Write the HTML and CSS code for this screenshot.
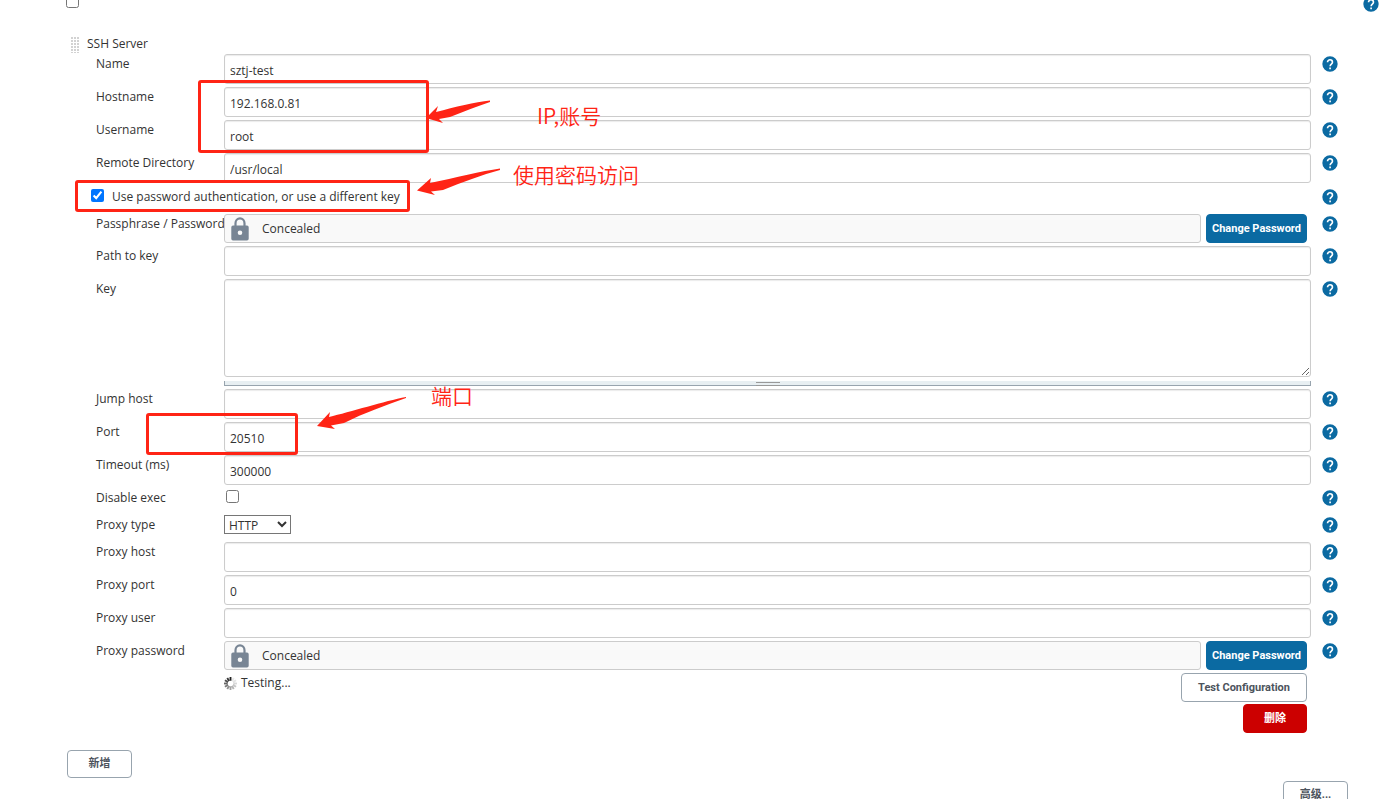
FILE: index.html
```html
<!DOCTYPE html>
<html lang="zh-CN">
<head>
<meta charset="utf-8">
<title>SSH Server</title>
<link rel="stylesheet" href="styles.css">
</head>
<body>
<svg class="defs" aria-hidden="true">
  <symbol id="help" viewBox="0 0 24 24"><path fill="#0b6aa2" d="M12 .5a11.500 11.500 0 1 0 0 23 11.500 11.500 0 0 0 0-23z"/><path fill="none" stroke="#fff" stroke-width="2.400" d="M8.300 9.300a3.700 3.700 0 0 1 7.400 0c0 2.700-3.500 2.900-3.500 6"/><path fill="#fff" d="M10.900 17.200h2.500v2.600h-2.500z"/></symbol>
  <symbol id="lock" viewBox="0 0 18 24"><path fill="none" stroke="#788594" stroke-width="2.200" d="M4.500 10V6.200a4.500 4.800 0 0 1 9 0V10"/><path fill="#788594" fill-rule="evenodd" d="M2 8.500h14a1.700 1.700 0 0 1 1.700 1.700v11.600a1.700 1.700 0 0 1-1.700 1.700H2a1.700 1.700 0 0 1-1.700-1.700V10.200A1.700 1.700 0 0 1 2 8.500zm7 5a2.300 2.300 0 1 0 0 4.600 2.300 2.300 0 0 0 0-4.600z"/></symbol>
</svg>
<main class="page">
  <header class="top">
    <input type="checkbox" aria-label="Enable">
    <a class="help" href="#" aria-label="Help"><svg><use href="#help"/></svg></a>
  </header>

  <form class="server">
    <h1 class="title"><span class="drag"></span>SSH Server</h1>
    <div class="row"><label for="name">Name</label><input class="text" id="name" value="sztj-test"><a class="help" href="#" aria-label="Help"><svg><use href="#help"/></svg></a></div>
    <div class="row"><label for="host">Hostname</label><input class="text" id="host" value="192.168.0.81"><a class="help" href="#" aria-label="Help"><svg><use href="#help"/></svg></a></div>
    <div class="row"><label for="user">Username</label><input class="text" id="user" value="root"><a class="help" href="#" aria-label="Help"><svg><use href="#help"/></svg></a></div>
    <div class="row"><label for="dir">Remote Directory</label><input class="text" id="dir" value="/usr/local"><a class="help" href="#" aria-label="Help"><svg><use href="#help"/></svg></a></div>
    <div class="row auth"><div class="check"><input type="checkbox" id="auth" checked><label for="auth">Use password authentication, or use a different key</label></div><a class="help" href="#" aria-label="Help"><svg><use href="#help"/></svg></a></div>
    <div class="row secret"><span>Passphrase / Password</span><div class="password"><div class="concealed"><svg class="lock"><use href="#lock"/></svg><span>Concealed</span></div><button type="button" class="btn primary">Change Password</button></div><a class="help" href="#" aria-label="Help"><svg><use href="#help"/></svg></a></div>
    <div class="row"><label for="path">Path to key</label><input class="text" id="path"><a class="help" href="#" aria-label="Help"><svg><use href="#help"/></svg></a></div>
    <div class="row"><label for="key">Key</label><div class="area"><textarea id="key"></textarea><div class="grip"><i></i></div></div><a class="help" href="#" aria-label="Help"><svg><use href="#help"/></svg></a></div>
    <div class="row"><label for="jump">Jump host</label><input class="text" id="jump"><a class="help" href="#" aria-label="Help"><svg><use href="#help"/></svg></a></div>
    <div class="row"><label for="port">Port</label><input class="text" id="port" value="20510"><a class="help" href="#" aria-label="Help"><svg><use href="#help"/></svg></a></div>
    <div class="row"><label for="timeout">Timeout (ms)</label><input class="text" id="timeout" value="300000"><a class="help" href="#" aria-label="Help"><svg><use href="#help"/></svg></a></div>
    <div class="row short"><label for="exec">Disable exec</label><div class="single"><input type="checkbox" id="exec"></div><a class="help" href="#" aria-label="Help"><svg><use href="#help"/></svg></a></div>
    <div class="row short"><label for="ptype">Proxy type</label><div><select id="ptype"><option>HTTP</option><option>SOCKS4</option></select></div><a class="help" href="#" aria-label="Help"><svg><use href="#help"/></svg></a></div>
    <div class="row"><label for="phost">Proxy host</label><input class="text" id="phost"><a class="help" href="#" aria-label="Help"><svg><use href="#help"/></svg></a></div>
    <div class="row"><label for="pport">Proxy port</label><input class="text" id="pport" value="0"><a class="help" href="#" aria-label="Help"><svg><use href="#help"/></svg></a></div>
    <div class="row"><label for="puser">Proxy user</label><input class="text" id="puser"><a class="help" href="#" aria-label="Help"><svg><use href="#help"/></svg></a></div>
    <div class="row secret"><span>Proxy password</span><div class="password"><div class="concealed"><svg class="lock"><use href="#lock"/></svg><span>Concealed</span></div><button type="button" class="btn primary">Change Password</button></div><a class="help" href="#" aria-label="Help"><svg><use href="#help"/></svg></a></div>
    <div class="row result">
      <div class="status">
        <svg class="spinner" viewBox="0 0 14 14" fill="none" stroke="#222" stroke-width="2"><path d="M7 0v4"/><path opacity=".9" d="M3.500 1l2 3.300"/><path opacity=".8" d="M1 3.500l3.300 2"/><path opacity=".7" d="M0 7h4"/><path opacity=".6" d="M1 10.500l3.300-2"/><path opacity=".5" d="M3.500 13l2-3.300"/><path opacity=".42" d="M7 14v-4"/><path opacity=".34" d="M10.500 13l-2-3.300"/><path opacity=".26" d="M13 10.500l-3.300-2"/><path opacity=".18" d="M14 7h-4"/><path opacity=".12" d="M13 3.500l-3.300 2"/><path opacity=".1" d="M10.500 1l-2 3.300"/></svg>
        <span>Testing...</span>
      </div>
      <div class="actions"><button type="button" class="btn test">Test Configuration</button><button type="button" class="btn danger">删除</button></div>
    </div>
  </form>

  <div class="add"><button type="button" class="btn">新增</button></div>
  <footer class="more"><button type="button" class="btn">高级...</button></footer>

  <div class="mark mark-host"></div>
  <div class="mark mark-auth"></div>
  <div class="mark mark-port"></div>
  <svg class="arrows" width="1386" height="802" fill="#ff2415">
    <path d="M490 100.500C475 102 455 107 436 112L438 106L426 118L443 123L439 119L450 117C465 111 478 106 490 102z"/>
    <path d="M500 168.500C482 171 455 178 430 183L431 178L417 190.500L435 195L431 191.500L443 190C462 182 482 175 500 170z"/>
    <path d="M406 397C385 401 350 412 329 417L330 412L317 426L335 429L331 425.500L344 423C364 413 386 405 406 398z"/>
  </svg>
  <span class="note note-host">IP,账号</span>
  <span class="note note-auth">使用密码访问</span>
  <span class="note note-port">端口</span>
</main>
</body>
</html>
```
FILE: styles.css
```css
* { box-sizing: border-box; }
body {
  margin: 0;
  background: #fff;
  color: #333;
  font: 12px/20px "Open Sans", "Noto Sans CJK SC", sans-serif;
}
input, select, textarea, button { font: inherit; color: inherit; margin: 0; }
input[type="checkbox"] { width: 13px; height: 13px; display: block; }
.defs { position: absolute; width: 0; height: 0; }
.page { position: relative; overflow: hidden; }

.top {
  display: flex;
  justify-content: space-between;
  align-items: flex-end;
  height: 12px;
  padding: 0 7px 0 66px;
  overflow: hidden;
}
.top input { margin-bottom: 4px; flex: none; }

.help { display: block; width: 16px; height: 16px; }
.help svg { display: block; width: 16px; height: 16px; }

.server { padding: 22px 48px 17px 96px; }
.title {
  display: flex;
  align-items: center;
  gap: 7px;
  height: 20px;
  margin: 0 0 0 -26px;
  font-size: 12px;
  line-height: 22px;
  font-weight: 400;
}
.drag {
  width: 10px;
  height: 17px;
  background: repeating-linear-gradient(#fff 0 1px, transparent 1px 3px), repeating-linear-gradient(90deg, #fff 0 1px, #d2d2d2 1px 3px);
}

.row {
  display: grid;
  grid-template-columns: 128px minmax(0, 1fr) 16px;
  align-items: start;
  min-height: 33px;
}
.row > .help { margin-top: 2px; }
.row > :nth-child(2) { margin-right: 11px; }
.row > label, .row > span { white-space: nowrap; }

.text, textarea {
  border: 1px solid #ccc;
  border-radius: 3px;
  background: #fff;
  box-shadow: inset 0 1px 1px rgba(0, 0, 0, .08);
}
.text { height: 30px; padding: 3px 5px 0; }

.row.auth { grid-template-columns: minmax(0, 1fr) 16px; min-height: 28px; padding-top: 1px; }
.row.auth .help { margin-top: 2px; }
.check { display: flex; align-items: flex-start; gap: 8px; margin-left: -5px; }
.check input { margin-top: 2px; }
.row.secret { min-height: 32px; }
.row.secret > .password { display: flex; gap: 5px; margin-right: 15px; }
.concealed {
  flex: 1;
  display: flex;
  align-items: center;
  gap: 13px;
  height: 29px;
  padding: 0 6px;
  border: 1px solid #ccc;
  border-radius: 3px;
  background: #f9f9f9;
}
.concealed span { padding-top: 1px; }
.lock { width: 18px; height: 24px; }

.btn {
  height: 29px;
  padding: 0;
  border: 1px solid #98a4ae;
  border-radius: 4px;
  background: #fff;
  color: #4d545d;
  font: 700 11px/16px Roboto, "Noto Sans CJK SC", sans-serif;
  white-space: nowrap;
}
.btn.primary { width: 101px; border-color: #0b6aa2; background: #0b6aa2; color: #fff; }
.btn.test { width: 126px; }
.btn.danger { width: 64px; border-color: #c00; background: #c00; color: #fff; }

.area { display: flex; flex-direction: column; gap: 4px; height: 110px; }
textarea { height: 98px; resize: vertical; }
.grip {
  display: flex;
  justify-content: center;
  height: 5px;
  border: solid #98a4ae;
  border-width: 0 1px 1px;
  background: #e8eff2;
}
.grip i { width: 24px; height: 4px; margin-top: 1px; border: solid #999; border-width: 1px 0; flex: none; }

.row.short { min-height: 27px; }
.single { padding: 2px 2px 0; }
select {
  display: block;
  width: 67px;
  height: 19px;
  padding: 0;
  border: 1px solid #767676;
  border-radius: 0;
  background: #fff;
}

.row.result { grid-template-columns: minmax(0, 1fr) auto; }
.status { display: flex; align-items: center; gap: 4px; padding-left: 128px; }
.spinner { width: 13px; height: 13px; }
.actions { display: flex; flex-direction: column; align-items: flex-end; gap: 2px; }
.row.result > .actions { margin-right: 31px; }

.add { padding-left: 67px; height: 31px; }
.add .btn, .more .btn { width: 65px; height: 28px; }
.more { display: flex; justify-content: flex-end; height: 18px; padding-right: 38px; overflow: hidden; }

.mark { position: absolute; border: 3px solid #ff2415; border-radius: 3px; }
.mark-host { left: 198px; top: 80px; width: 231px; height: 73px; }
.mark-auth { left: 75px; top: 180px; width: 335px; height: 32px; }
.mark-port { left: 146px; top: 413px; width: 152px; height: 42px; }
.arrows { position: absolute; left: 0; top: 0; pointer-events: none; }
.note { position: absolute; color: #ff2415; font: 350 21px/28px "Noto Sans CJK SC", sans-serif; white-space: nowrap; }
.note-host { left: 537px; top: 101px; }
.note-auth { left: 513px; top: 160px; }
.note-port { left: 431px; top: 381px; }
```
